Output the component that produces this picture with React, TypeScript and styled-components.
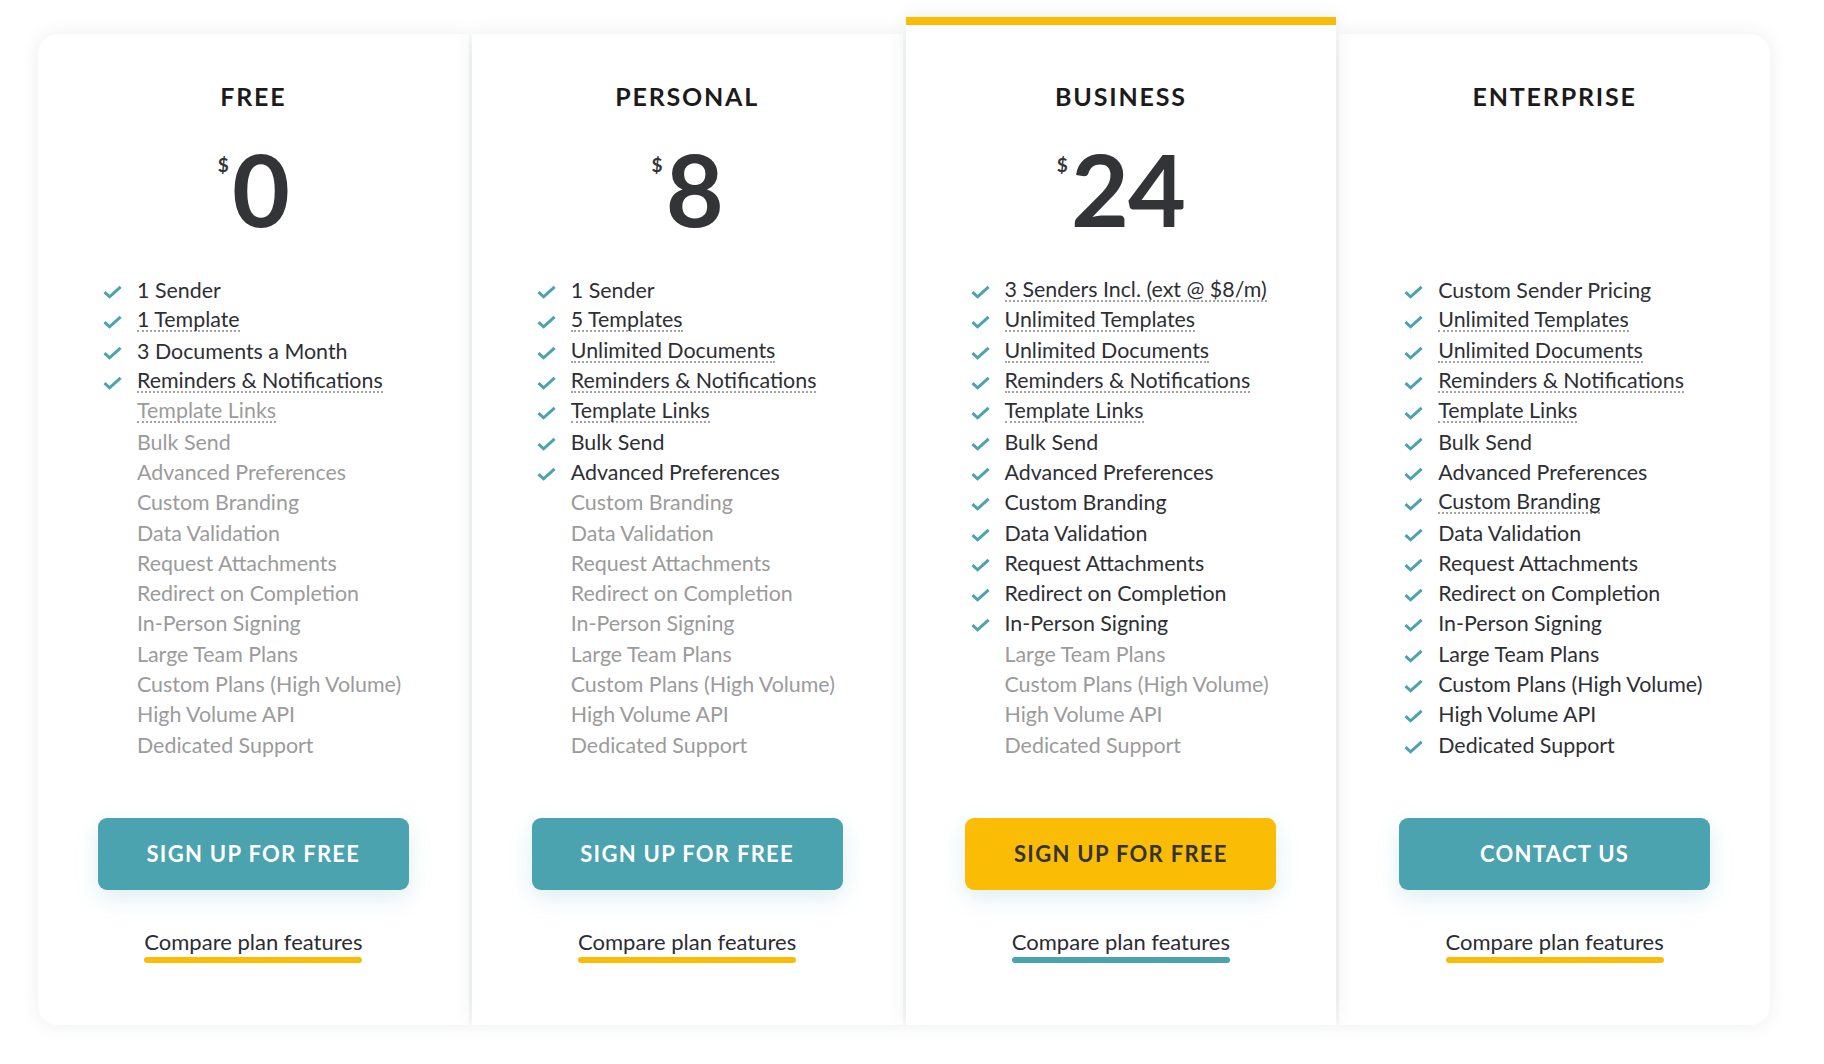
import styled, { createGlobalStyle } from 'styled-components';

const TEAL = '#4aa3ae';
const YELLOW = '#fbbc05';

type Feature = { label: string; dotted?: boolean };

type Plan = {
  name: string;
  price?: string;
  included: number;
  cta: string;
  featured?: boolean;
  features: Feature[];
};

const tail: Feature[] = [
  { label: 'Bulk Send' },
  { label: 'Advanced Preferences' },
  { label: 'Custom Branding' },
  { label: 'Data Validation' },
  { label: 'Request Attachments' },
  { label: 'Redirect on Completion' },
  { label: 'In-Person Signing' },
  { label: 'Large Team Plans' },
  { label: 'Custom Plans (High Volume)' },
  { label: 'High Volume API' },
  { label: 'Dedicated Support' },
];

const plans: Plan[] = [
  {
    name: 'FREE',
    price: '0',
    included: 4,
    cta: 'SIGN UP FOR FREE',
    features: [
      { label: '1 Sender' },
      { label: '1 Template', dotted: true },
      { label: '3 Documents a Month' },
      { label: 'Reminders & Notifications', dotted: true },
      { label: 'Template Links', dotted: true },
      ...tail,
    ],
  },
  {
    name: 'PERSONAL',
    price: '8',
    included: 7,
    cta: 'SIGN UP FOR FREE',
    features: [
      { label: '1 Sender' },
      { label: '5 Templates', dotted: true },
      { label: 'Unlimited Documents', dotted: true },
      { label: 'Reminders & Notifications', dotted: true },
      { label: 'Template Links', dotted: true },
      ...tail,
    ],
  },
  {
    name: 'BUSINESS',
    price: '24',
    included: 12,
    cta: 'SIGN UP FOR FREE',
    featured: true,
    features: [
      { label: '3 Senders Incl. (ext @ $8/m)', dotted: true },
      { label: 'Unlimited Templates', dotted: true },
      { label: 'Unlimited Documents', dotted: true },
      { label: 'Reminders & Notifications', dotted: true },
      { label: 'Template Links', dotted: true },
      ...tail,
    ],
  },
  {
    name: 'ENTERPRISE',
    included: 16,
    cta: 'CONTACT US',
    features: [
      { label: 'Custom Sender Pricing' },
      { label: 'Unlimited Templates', dotted: true },
      { label: 'Unlimited Documents', dotted: true },
      { label: 'Reminders & Notifications', dotted: true },
      { label: 'Template Links', dotted: true },
      { label: 'Bulk Send' },
      { label: 'Advanced Preferences' },
      { label: 'Custom Branding', dotted: true },
      ...tail.slice(3),
    ],
  },
];

const CheckIcon = () => (
  <svg width="19" height="14" viewBox="0 0 19 14" fill="none">
    <path d="M1.5 7.2 L6.6 11.8 L17.6 1.8" stroke={TEAL} strokeWidth="3" />
  </svg>
);

export default function App() {
  return (
    <>
      <GlobalStyle />
      <Page>
        <Plans>
          {plans.map((plan, i) => (
            <Card key={plan.name} $featured={plan.featured} $first={i === 0} $last={i === plans.length - 1}>
              <PlanName>{plan.name}</PlanName>
              <Price>
                {plan.price && (
                  <>
                    <Currency>$</Currency>
                    <Amount>{plan.price}</Amount>
                  </>
                )}
              </Price>
              <FeatureList>
                {plan.features.map((f, idx) => {
                  const on = idx < plan.included;
                  return (
                    <FeatureItem key={f.label} $on={on}>
                      <IconSlot>{on && <CheckIcon />}</IconSlot>
                      <FeatureLabel $dotted={f.dotted}>{f.label}</FeatureLabel>
                    </FeatureItem>
                  );
                })}
              </FeatureList>
              <CtaButton $featured={plan.featured}>{plan.cta}</CtaButton>
              <CompareLink href="#">
                <span>Compare plan features</span>
                <LinkBar $featured={plan.featured} />
              </CompareLink>
            </Card>
          ))}
        </Plans>
      </Page>
    </>
  );
}

const GlobalStyle = createGlobalStyle`
  * {
    box-sizing: border-box;
  }
  body {
    margin: 0;
    background: #ffffff;
    font-family: Lato, 'Liberation Sans', sans-serif;
    color: #2e2f35;
  }
`;

const Page = styled.div`
  width: 1824px;
  height: 1064px;
  padding: 17px 0 0 38px;
  overflow: hidden;
`;

const Plans = styled.div`
  width: 1732px;
  display: grid;
  grid-template-columns: repeat(4, 1fr);
  column-gap: 3px;
  align-items: end;
`;

const Card = styled.div<{ $featured?: boolean; $first?: boolean; $last?: boolean }>`
  display: flex;
  flex-direction: column;
  align-items: center;
  background: #ffffff;
  padding: ${(p) => (p.$featured ? '56px' : '47px')} 0 62px;
  border-top: ${(p) => (p.$featured ? `8px solid ${YELLOW}` : 'none')};
  border-radius: ${(p) => (p.$first ? '20px 0 0 20px' : p.$last ? '0 20px 20px 0' : '0')};
  box-shadow: 0 0 18px rgba(40, 70, 70, 0.09);
  position: relative;
  z-index: ${(p) => (p.$featured ? 2 : 1)};
`;

const PlanName = styled.h2`
  margin: 0;
  font-size: 25px;
  line-height: 30px;
  font-weight: 700;
  letter-spacing: 1.8px;
  color: #1c1a1b;
`;

const Price = styled.div`
  margin-top: 27px;
  height: 100px;
  display: flex;
  align-items: flex-start;
  color: #333438;
`;

const Currency = styled.span`
  font-size: 19px;
  line-height: 1;
  font-weight: 700;
  margin-top: 17px;
  margin-right: 3px;
`;

const Amount = styled.span`
  font-size: 100px;
  line-height: 100px;
  font-weight: 700;
  letter-spacing: -1px;
`;

const FeatureList = styled.ul`
  align-self: stretch;
  list-style: none;
  margin: 37px 0 0;
  padding: 0 0 0 65px;
`;

const FeatureItem = styled.li<{ $on: boolean }>`
  display: flex;
  align-items: center;
  height: 30.3px;
  font-size: 21.4px;
  color: ${(p) => (p.$on ? '#2e2f35' : '#9b9b9b')};
`;

const IconSlot = styled.span`
  width: 34px;
  flex-shrink: 0;
  display: flex;
  align-items: center;
  padding-top: 4px;
`;

const FeatureLabel = styled.span<{ $dotted?: boolean }>`
  border-bottom: ${(p) => (p.$dotted ? '2px dotted #a3a3a3' : 'none')};
  line-height: 22px;
`;

const CtaButton = styled.button<{ $featured?: boolean }>`
  margin-top: 58px;
  width: 311px;
  height: 72px;
  border: none;
  border-radius: 9px;
  background: ${(p) => (p.$featured ? YELLOW : TEAL)};
  color: ${(p) => (p.$featured ? '#333333' : '#ffffff')};
  font-family: Lato, 'Liberation Sans', sans-serif;
  font-size: 22px;
  font-weight: 700;
  letter-spacing: 1.3px;
  box-shadow: 0 8px 22px rgba(74, 163, 174, 0.18);
  cursor: pointer;
`;

const CompareLink = styled.a`
  margin-top: 40px;
  display: flex;
  flex-direction: column;
  gap: 3px;
  font-size: 22px;
  line-height: 24px;
  color: #2b2b35;
  text-decoration: none;
`;

const LinkBar = styled.span<{ $featured?: boolean }>`
  height: 6px;
  border-radius: 3px;
  background: ${(p) => (p.$featured ? TEAL : YELLOW)};
`;
